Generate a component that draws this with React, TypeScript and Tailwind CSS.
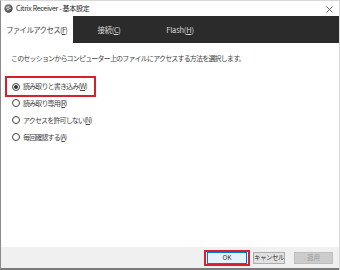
import React from "react";

const font = { fontFamily: '"Noto Sans CJK JP", "Noto Sans", sans-serif' };

function Radio({ checked }: { checked?: boolean }) {
  return (
    <span className="w-[8px] h-[8px] rounded-full border border-[#444] bg-white flex items-center justify-center shrink-0">
      {checked && <span className="w-[4px] h-[4px] rounded-full bg-[#333]" />}
    </span>
  );
}

export default function App() {
  return (
    <div
      className="w-[340px] h-[270px] bg-white border-l border-t border-r border-l-[#8a8a8a] border-t-[#d8d8d8] border-r-[#d8d8d8] flex flex-col text-[#222] overflow-hidden"
      style={font}
    >
      {/* Title bar */}
      <div className="h-[15px] flex items-center pl-[3px] pr-[6px] shrink-0">
        <svg width="9" height="9" viewBox="0 0 10 10" className="shrink-0">
          <defs>
            <radialGradient id="g" cx="0.4" cy="0.35" r="0.7">
              <stop offset="0" stopColor="#9a9a9a" />
              <stop offset="1" stopColor="#3c3c3c" />
            </radialGradient>
          </defs>
          <circle cx="5" cy="5" r="4.6" fill="url(#g)" />
          <circle cx="3.4" cy="4" r="0.8" fill="#eee" />
          <circle cx="5.2" cy="3.2" r="0.8" fill="#eee" />
          <circle cx="6.6" cy="5" r="0.8" fill="#eee" />
          <circle cx="4.4" cy="6.4" r="0.8" fill="#eee" />
        </svg>
        <span className="ml-[3px] text-[7px] leading-none tracking-[-0.3px] text-[#222]">
          Citrix Receiver - 基本設定
        </span>
        <div className="flex-1" />
        <svg width="7" height="7" viewBox="0 0 7 7" className="mt-[1px]">
          <path d="M0.5 0.5 L6.5 6.5 M6.5 0.5 L0.5 6.5" stroke="#555" strokeWidth="0.9" />
        </svg>
      </div>

      {/* Tabs */}
      <div className="h-[27px] flex shrink-0 bg-[#2b2b2b]">
        <div className="w-[72px] bg-white flex items-center pl-[5px] text-[7.5px] tracking-[-0.7px] text-[#444]">
          ファイルアクセス(<span className="underline">F</span>)
        </div>
        <div className="w-[72px] flex items-center justify-center text-[7.5px] tracking-[-0.4px] text-[#d8d8d8]">
          接続(<span className="underline">C</span>)
        </div>
        <div className="w-[70px] flex items-center justify-center text-[7.5px] tracking-[-0.2px] text-[#d8d8d8]">
          Flash(<span className="underline">H</span>)
        </div>
      </div>

      {/* Content */}
      <div className="flex-1 flex flex-col pt-[11px]">
        <div className="pl-[10px] h-[8px] flex items-center text-[7px] tracking-[-0.82px] text-[#444] whitespace-nowrap">
          このセッションからコンピューター上のファイルにアクセスする方法を選択します。
        </div>

        <div className="ml-[4px] mt-[14px] w-[91px] h-[21px] border-2 border-[#d5212e] flex items-center pl-[5px] gap-[3px]">
          <Radio checked />
          <span className="text-[7px] tracking-[-0.85px] text-[#444] whitespace-nowrap">
            読み取りと書き込み(<span className="underline">W</span>)
          </span>
        </div>

        <div className="h-[12px] flex items-center pl-[11px] gap-[3px]">
          <Radio />
          <span className="text-[7px] tracking-[-0.85px] text-[#444] whitespace-nowrap">
            読み取り専用(<span className="underline">R</span>)
          </span>
        </div>
        <div className="h-[12px] mt-[5px] flex items-center pl-[11px] gap-[3px]">
          <Radio />
          <span className="text-[7px] tracking-[-0.85px] text-[#444] whitespace-nowrap">
            アクセスを許可しない(<span className="underline">N</span>)
          </span>
        </div>
        <div className="h-[12px] mt-[5px] flex items-center pl-[11px] gap-[3px]">
          <Radio />
          <span className="text-[7px] tracking-[-0.85px] text-[#444] whitespace-nowrap">
            毎回確認する(<span className="underline">A</span>)
          </span>
        </div>
      </div>

      {/* Footer */}
      <div className="h-[21px] bg-[#f0f0f0] flex items-center justify-end pr-[6px] shrink-0">
        <div className="w-[46px] h-[16px] border-2 border-[#d5212e] flex items-center justify-center">
          <div className="w-[40px] h-[12px] bg-[#e5f1fb] border border-[#0078d7] flex items-center justify-center text-[6.5px] text-[#333]">
            OK
          </div>
        </div>
        <div className="ml-[3px] w-[32px] h-[12px] bg-[#e1e1e1] border border-[#adadad] flex items-center justify-center text-[6.5px] tracking-[-0.5px] text-[#333]">
          キャンセル
        </div>
        <div className="ml-[9px] w-[39px] h-[12px] bg-[#cccccc] border border-[#bfbfbf] flex items-center justify-center text-[6.5px] text-[#a0a0a0]">
          適用
        </div>
      </div>
      <div className="h-[2px] bg-[#7a7a7a] shrink-0" />
    </div>
  );
}
